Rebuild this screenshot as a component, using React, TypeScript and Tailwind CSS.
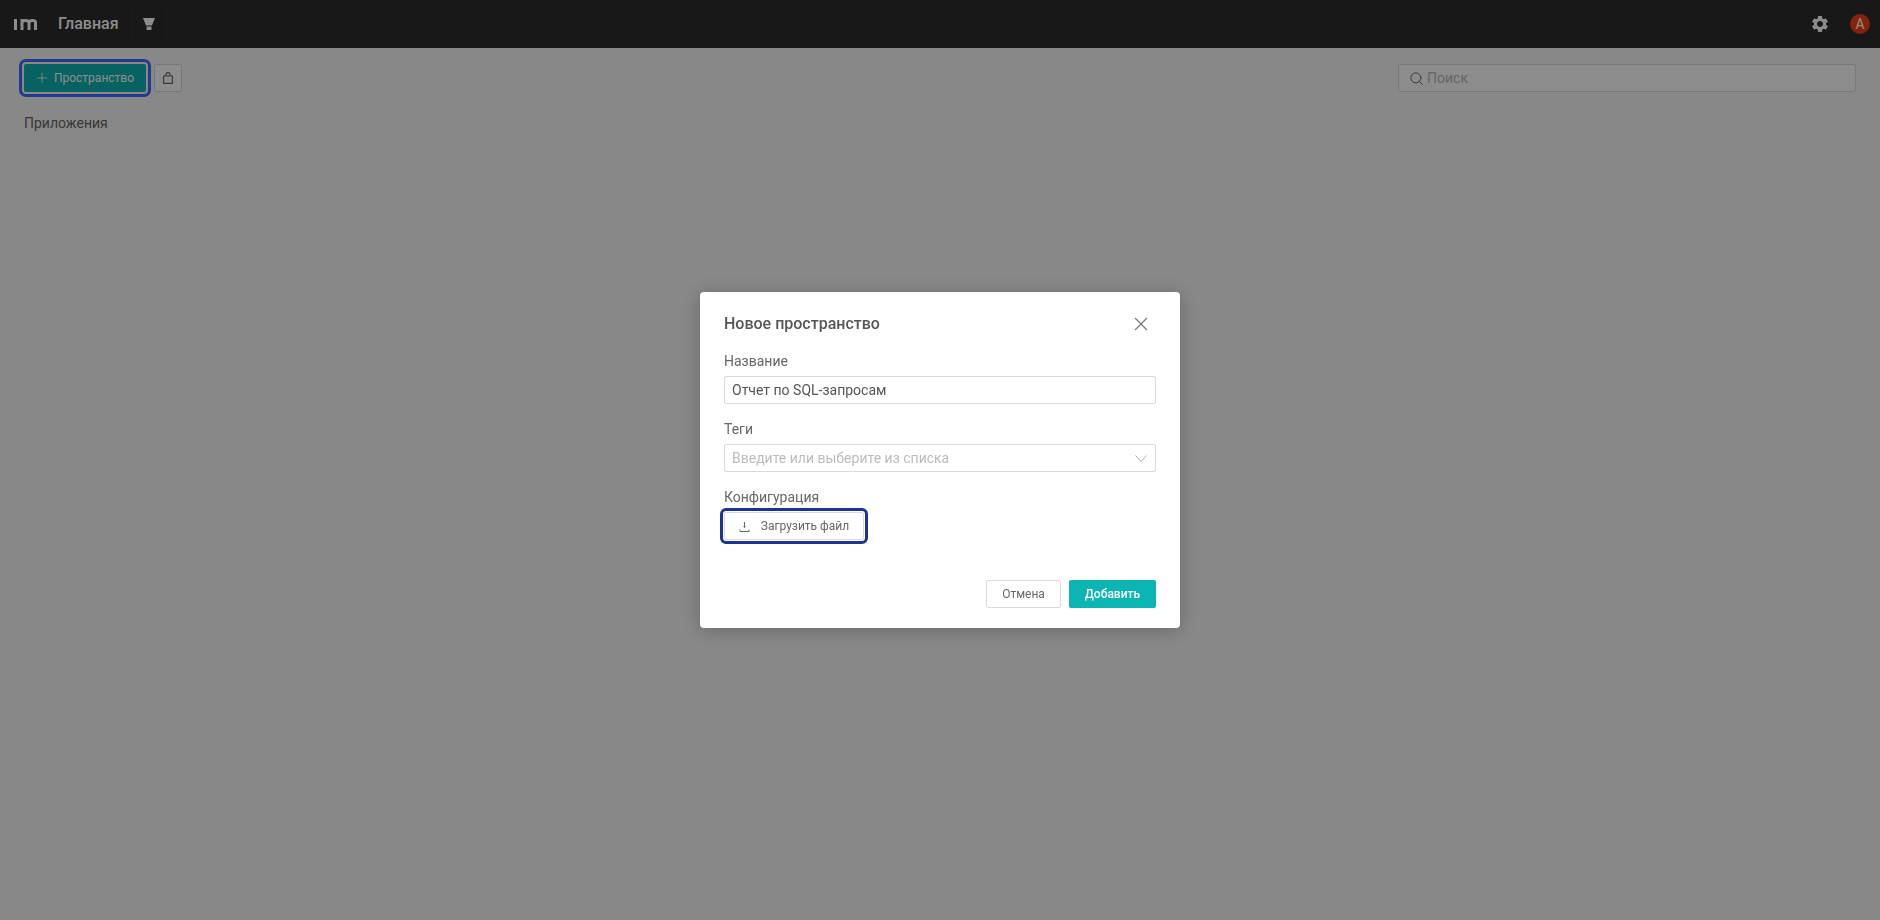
import { Plus, Search } from 'lucide-react';
import { MdSettings } from 'react-icons/md';

export default function App() {
    return (
        <div className="h-[920px] bg-[#f8f8f8] text-[#666] overflow-hidden" style={{ fontFamily: 'Roboto, sans-serif' }}>
            <header className="h-12 bg-[#2c2c2c] flex items-center">
                <svg className="ml-[14px] w-[23px] h-3" viewBox="0 0 23 12" fill="none" stroke="#fff" strokeWidth="3">
                    <path d="M1.500 1v11" />
                    <path d="M8 12V1M8 5Q8 2.500 11.500 2.500T15 5V12M15 5Q15 2.500 18.500 2.500T21.500 5V12" />
                </svg>
                <span className="ml-[21px] text-base font-medium text-white">Главная</span>
                <div className="ml-[13px] w-[35px] h-10 border-x border-[#333] flex items-center justify-center">
                    <svg className="w-3 h-3" viewBox="0 0 12 12" fill="#fff">
                        <path d="M0 0H12L9 7.500H3ZM3.500 8.500H8.500V12H3.500Z" />
                    </svg>
                </div>
                <div className="ml-auto flex items-center">
                    <MdSettings className="w-5 h-5 text-white" />
                    <div className="ml-[20px] mr-[10px] w-5 h-5 rounded-full bg-[#f53f14] text-white text-sm flex items-center justify-center">A</div>
                </div>
            </header>

            <main className="px-6 pt-4">
                <div className="flex items-center">
                    <button className="w-[122px] h-7 rounded-[2px] bg-[#0bb5b3] text-white text-xs flex items-center justify-center gap-[4px] pr-[2px] outline-[3px] outline-offset-2 outline-[#4169ff]">
                        <Plus className="w-4 h-4" strokeWidth={1.25} />
                        Пространство
                    </button>
                    <button className="ml-[8px] w-7 h-7 rounded-[2px] border border-[#d9d9d9] bg-white flex items-center justify-center">
                        <svg className="w-[10px] h-3" viewBox="0 0 10 12" fill="none" stroke="#666" strokeWidth="1.100">
                            <path d="M0.600 4H9.400V11.400H0.600Z" />
                            <path d="M3 4V2.600Q3 0.600 5 0.600T7 2.600V4" />
                        </svg>
                    </button>
                    <div className="ml-auto w-[458px] h-7 rounded-[2px] border border-[#d9d9d9] bg-white flex items-center px-[10px] gap-[3px] text-sm text-[#b8b8b8]">
                        <Search className="w-[15px] h-[15px] text-[#666]" strokeWidth={1.5} />
                        Поиск
                    </div>
                </div>
                <div className="mt-[21px] text-sm">Приложения</div>
            </main>

            <div className="fixed inset-0 bg-black/45" />
            <div className="fixed inset-0 flex items-center justify-center">
                <div className="w-[480px] h-[336px] bg-white rounded-[4px] pt-6 px-6 pb-5 shadow-[0_2px_20px_rgba(0,0,0,0.25)] flex flex-col text-[#666]">
                    <div className="flex items-center justify-between h-[15px]">
                        <h2 className="text-base font-medium text-[#555]">Новое пространство</h2>
                        <svg className="w-[14px] h-[14px] mr-[8px]" viewBox="0 0 14 14" fill="none" stroke="#777" strokeWidth="1.2">
                            <path d="M1 1L13 13M13 1L1 13" />
                        </svg>
                    </div>

                    <label className="mt-[22px] text-sm leading-4">Название</label>
                    <div className="mt-[7px] h-7 rounded-[2px] border border-[#d9d9d9] flex items-center px-[7px] text-sm text-[#555]">Отчет по SQL-запросам</div>

                    <label className="mt-[17px] text-sm leading-4">Теги</label>
                    <div className="mt-[7px] h-7 rounded-[2px] border border-[#d9d9d9] flex items-center justify-between pl-[7px] pr-[8px] text-sm text-[#bbb]">
                        Введите или выберите из списка
                        <svg className="w-3 h-[7px]" viewBox="0 0 12 7" fill="none" stroke="#aaa" strokeWidth="1">
                            <path d="M0.500 0.500L6 6.500L11.500 0.500" />
                        </svg>
                    </div>

                    <label className="mt-[17px] text-sm leading-4">Конфигурация</label>
                    <button className="mt-[7px] w-[140px] h-7 rounded-[2px] border border-[#d9d9d9] text-xs flex items-center justify-center gap-[11px] outline-[3px] outline-offset-[1px] outline-[#1c3394]">
                        <svg className="w-[11px] h-3" viewBox="0 0 11 12" fill="none" stroke="#666" strokeWidth="1">
                            <path d="M5.500 2V7.500M4.500 6.500L5.500 7.500L6.500 6.500" />
                            <path d="M1 9.500V11.500H10V9.500" />
                        </svg>
                        Загрузить файл
                    </button>

                    <div className="mt-auto flex justify-end gap-2">
                        <button className="w-[75px] h-7 rounded-[2px] border border-[#d9d9d9] text-xs">Отмена</button>
                        <button className="w-[87px] h-7 rounded-[2px] bg-[#0bb5b3] text-white text-xs font-medium">Добавить</button>
                    </div>
                </div>
            </div>
        </div>
    );
}
